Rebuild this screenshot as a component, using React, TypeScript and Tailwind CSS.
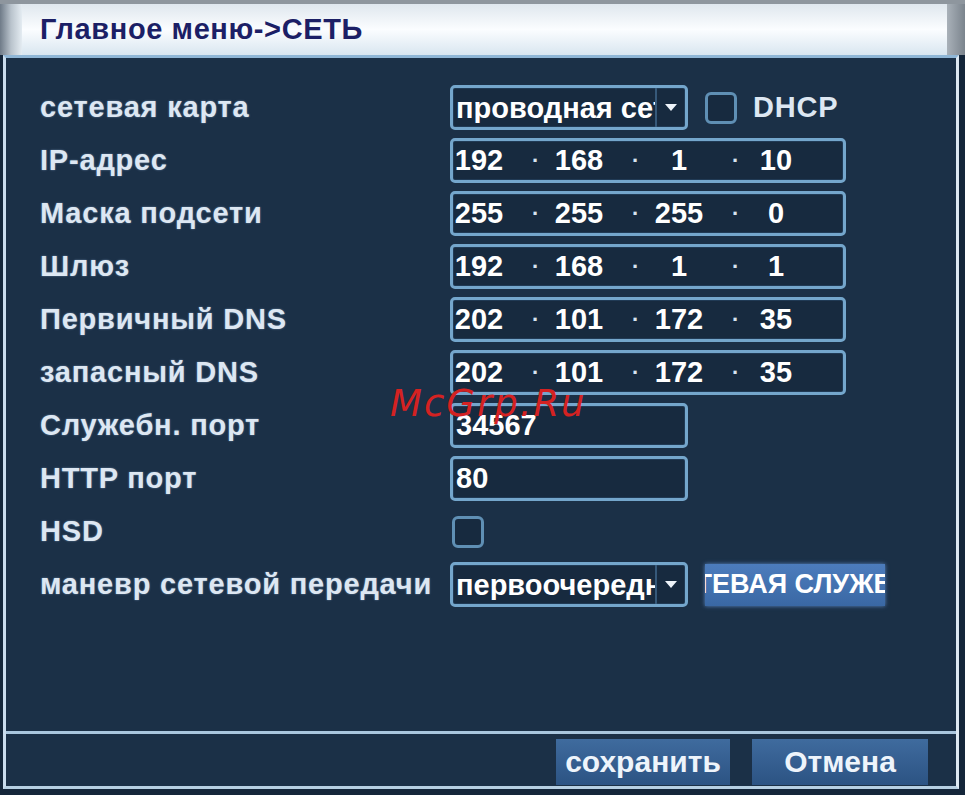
const FONT = { fontFamily: '"Liberation Sans", Arial, sans-serif' };

const ROWS: { label: string; kind: 'ip' | 'port'; value: string[] }[] = [
  { label: 'IP-адрес', kind: 'ip', value: ['192', '168', '1', '10'] },
  { label: 'Маска подсети', kind: 'ip', value: ['255', '255', '255', '0'] },
  { label: 'Шлюз', kind: 'ip', value: ['192', '168', '1', '1'] },
  { label: 'Первичный DNS', kind: 'ip', value: ['202', '101', '172', '35'] },
  { label: 'запасный DNS', kind: 'ip', value: ['202', '101', '172', '35'] },
  { label: 'Служебн. порт', kind: 'port', value: ['34567'] },
  { label: 'HTTP порт', kind: 'port', value: ['80'] },
];

function Label({ children }: { children: string }) {
  return (
    <div className="w-[444px] shrink-0 pl-[34px] text-[29px] font-bold leading-none tracking-[0.8px] text-[#dde7f2] [text-shadow:0_0_2px_rgba(160,190,230,0.6)]">
      {children}
    </div>
  );
}

const boxCls =
  'flex h-[45px] items-center rounded-[5px] border-[3px] border-[#74a6cc] bg-[#172a3f] text-[29px] font-bold leading-none text-white shadow-[inset_0_0_0_1px_#203a55]';

function Select({ text }: { text: string }) {
  return (
    <div className={`${boxCls} w-[238px] overflow-hidden`}>
      <div className="flex-1 overflow-hidden whitespace-nowrap pl-[3px] pt-[2px]">{text}</div>
      <div className="flex h-full w-[30px] items-center justify-center border-l-2 border-[#36597a]">
        <svg width="14" height="9" viewBox="0 0 14 9">
          <path d="M1 1 L13 1 L7 8 Z" fill="#eef4fa" />
        </svg>
      </div>
    </div>
  );
}

function Check() {
  return <div className="h-[32px] w-[32px] rounded-[6px] border-[3px] border-[#5f8fb4] bg-[#172a3f]" />;
}

function Ip({ parts }: { parts: string[] }) {
  return (
    <div className={`${boxCls} w-[396px]`}>
      {parts.map((p, i) => (
        <div key={i} className="flex items-center">
          <span className={i === 3 ? 'w-[46px] text-center' : 'w-[52px] text-center'}>{p}</span>
          {i < 3 && (
            <span className="w-[48px] pl-[27px] text-[22px] text-[#d8e4f0]">·</span>
          )}
        </div>
      ))}
    </div>
  );
}

export default function App() {
  return (
    <div className="relative flex h-[795px] w-[965px] flex-col overflow-hidden bg-[#14263a]" style={FONT}>
      {/* title bar */}
      <div className="flex h-[55px] shrink-0 border-t-4 border-[#8e969e]">
        <div className="w-[22px] bg-gradient-to-r from-[#6f7b88] via-[#b9c3cc] to-[#e4ecf2]" />
        <div className="flex flex-1 items-center bg-gradient-to-b from-[#dfe7ee] via-[#fbfdff] to-[#d9e6f0] pl-[18px]">
          <span className="text-[29px] font-semibold leading-none tracking-[0.6px] text-[#1c1f66]">Главное меню-&gt;СЕТЬ</span>
        </div>
        <div className="w-[18px] bg-gradient-to-r from-[#a9b1b9] to-[#7b848d]" />
      </div>

      {/* main panel */}
      <div className="mb-[6px] ml-[3px] mr-[6px] flex flex-1 flex-col border-[3px] border-t-[#8fb6d6] border-b-[#b6cfe2] border-l-[#c9dced] border-r-[#dde8f2] bg-[#1b3047]">
        <div className="flex flex-1 flex-col pt-[23px]">
          <div className="flex h-[53px] items-center">
            <Label>сетевая карта</Label>
            <Select text="проводная сеть" />
            <div className="ml-[17px]">
              <Check />
            </div>
            <span className="ml-[16px] text-[29px] font-bold leading-none tracking-[0.8px] text-[#dde7f2]">DHCP</span>
          </div>
          {ROWS.map((r) => (
            <div key={r.label} className="flex h-[53px] items-center">
              <Label>{r.label}</Label>
              {r.kind === 'ip' ? (
                <Ip parts={r.value} />
              ) : (
                <div className={`${boxCls} w-[238px] pl-[3px]`}>{r.value[0]}</div>
              )}
            </div>
          ))}
          <div className="flex h-[53px] items-center">
            <Label>HSD</Label>
            <div className="ml-[2px]">
              <Check />
            </div>
          </div>
          <div className="flex h-[53px] items-center">
            <Label>маневр сетевой передачи</Label>
            <Select text="первоочередность" />
            <div className="ml-[17px] flex h-[42px] w-[180px] items-center overflow-hidden bg-gradient-to-b from-[#4c7cbc] to-[#3a68a4] shadow-[0_0_4px_#5a88c4]">
              <span className="-ml-[47px] whitespace-nowrap text-[27px] font-bold leading-none text-white">СЕТЕВАЯ СЛУЖБА</span>
            </div>
          </div>
        </div>

        {/* footer */}
        <div className="flex h-[55px] shrink-0 items-center justify-end gap-[22px] border-t-[3px] border-[#a9c6de] pr-[28px] pt-[4px]">
          <button className="h-[46px] w-[174px] bg-gradient-to-b from-[#3f6b9e] to-[#2c5383] text-[30px] font-bold leading-none text-[#eef4fb]">
            сохранить
          </button>
          <button className="h-[46px] w-[176px] bg-gradient-to-b from-[#3f6b9e] to-[#2c5383] text-[30px] font-bold leading-none text-[#eef4fb]">
            Отмена
          </button>
        </div>
      </div>

      {/* watermark */}
      <div className="absolute left-[390px] top-[376px] text-[37px] italic tracking-[2px] text-[#d42222]" style={{ fontFamily: '"DejaVu Sans", sans-serif', fontWeight: 300 }}>
        McGrp.Ru
      </div>
    </div>
  );
}
